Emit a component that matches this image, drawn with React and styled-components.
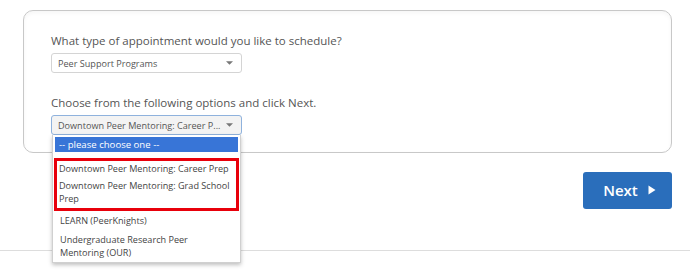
import React from 'react';
import styled, { createGlobalStyle } from 'styled-components';

const GlobalStyle = createGlobalStyle`
    body {
        margin: 0;
        background: #fff;
        font-family: "Open Sans", "Noto Sans", sans-serif;
    }
`;

const options = [
    { label: 'Downtown Peer Mentoring: Career Prep', marked: true },
    { label: 'Downtown Peer Mentoring: Grad School Prep', marked: true },
    { label: 'LEARN (PeerKnights)' },
    { label: 'Undergraduate Research Peer Mentoring (OUR)' },
];

const Caret = () => (
    <CaretIcon viewBox="0 0 8 4" aria-hidden="true">
        <path d="M0 0h8L4 4z" fill="#777" />
    </CaretIcon>
);

const App = () => (
    <Page>
        <GlobalStyle />
        <Panel>
            <Question>What type of appointment would you like to schedule?</Question>
            <Select>
                <SelectText>Peer Support Programs</SelectText>
                <Caret />
            </Select>
            <Question $gap>Choose from the following options and click Next.</Question>
            <SelectWrap>
                <Select $focused>
                    <SelectText>Downtown Peer Mentoring: Career P...</SelectText>
                    <Caret />
                </Select>
                <Menu>
                    <Placeholder>-- please choose one --</Placeholder>
                    <Marked>
                        {options.filter(o => o.marked).map(o => (
                            <Option key={o.label}>{o.label}</Option>
                        ))}
                    </Marked>
                    {options.filter(o => !o.marked).map(o => (
                        <Option key={o.label} $plain>{o.label}</Option>
                    ))}
                </Menu>
            </SelectWrap>
        </Panel>
        <Actions>
            <NextButton>
                Next
                <svg width="8" height="10" viewBox="0 0 8 10" aria-hidden="true">
                    <path d="M0.5 0.5L7.5 5L0.5 9.5z" fill="#fff" />
                </svg>
            </NextButton>
        </Actions>
        <Rule />
    </Page>
);

export default App;

const Page = styled.div`
    width: 699px;
    height: 274px;
    padding-top: 10px;
    box-sizing: border-box;
    overflow: hidden;
`;

const Panel = styled.div`
    margin-left: 23px;
    width: 649px;
    height: 143px;
    box-sizing: border-box;
    border: 1px solid #c8c8c8;
    border-radius: 10px;
    padding: 22px 0 0 27px;
    box-shadow: inset 0 2px 4px rgba(0, 0, 0, 0.04);
`;

const Question = styled.div`
    font-size: 11.5px;
    line-height: 16px;
    color: #555;
    margin-top: ${p => (p.$gap ? '22px' : '0')};
    margin-bottom: 4px;
`;

const SelectWrap = styled.div`
    position: relative;
    width: 191px;
`;

const Select = styled.div`
    width: 191px;
    height: 20px;
    box-sizing: border-box;
    display: flex;
    align-items: center;
    justify-content: space-between;
    padding: 0 8px 0 6px;
    border: 1px solid ${p => (p.$focused ? '#8fb2dd' : '#d4d4d4')};
    border-radius: 3px;
    background: ${p => (p.$focused ? '#f3f3f3' : '#fff')};
`;

const SelectText = styled.span`
    font-size: 9.1px;
    color: #555;
    white-space: nowrap;
`;

const CaretIcon = styled.svg`
    width: 7px;
    height: 4px;
`;

const Menu = styled.div`
    position: absolute;
    top: 20px;
    left: 1px;
    width: 189px;
    box-sizing: border-box;
    background: #fff;
    border: 1px solid #d0d0d0;
    border-top: none;
    box-shadow: 0 2px 4px rgba(0, 0, 0, 0.25);
    padding: 2px 2px 0;
`;

const Placeholder = styled.div`
    background: #3875d7;
    color: #fff;
    font-size: 9.6px;
    line-height: 15px;
    padding: 0 4px;
    margin-bottom: 6px;
`;

const Marked = styled.div`
    border: 3px solid #e8000b;
    margin: 0 -1px 0 -1px;
`;

const Option = styled.div`
    font-size: 9.1px;
    line-height: 13px;
    color: #444;
    padding: ${p => (p.$plain ? '3px 12px 3px 5px' : '1px 2px 3px 2px')};
`;

const Actions = styled.div`
    display: flex;
    justify-content: flex-end;
    width: 672px;
    margin-top: 19px;
`;

const NextButton = styled.button`
    width: 89px;
    height: 37px;
    display: flex;
    align-items: center;
    justify-content: center;
    gap: 10px;
    border: none;
    border-radius: 3px;
    background: #2a6ebb;
    color: #fff;
    font-family: "Open Sans", sans-serif;
    font-size: 15px;
    font-weight: 600;
    padding: 0 0 1px 4px;
    cursor: pointer;
`;

const Rule = styled.div`
    width: 690px;
    height: 1px;
    background: #ddd;
    margin-top: 41px;
`;
